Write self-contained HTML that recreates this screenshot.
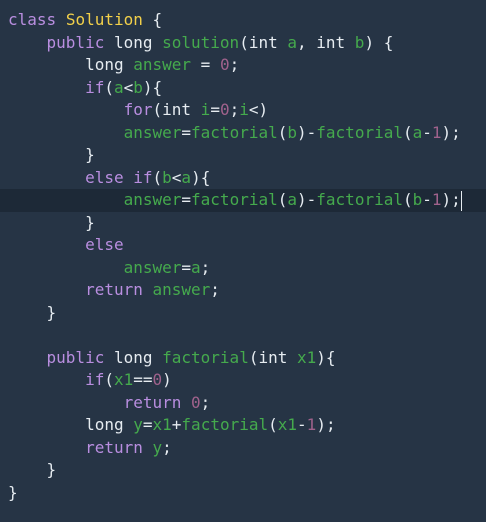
<!DOCTYPE html>
<html><head><style>
html,body{margin:0;padding:0;background:#263445;width:486px;height:522px;overflow:hidden}
pre{margin:0;padding:9px 0 0 8px;font-family:"DejaVu Sans Mono","Liberation Mono",monospace;font-size:16px;line-height:22.5px;color:#e6ecf1;position:relative}
.hl{position:absolute;left:0;top:189px;width:486px;height:22.5px;background:#1d2937}
.cur{position:absolute;left:461px;top:191px;width:1px;height:20px;background:#e6ecf1}
.k{color:#b98ee0}.g{color:#45aa4d}.n{color:#a0628c}.y{color:#f2d04a}
span{position:relative}
</style></head><body>
<div class="hl"></div><div class="cur"></div>
<pre><span class="k">class</span> <span class="y">Solution</span> {
    <span class="k">public</span> long <span class="g">solution</span>(int <span class="g">a</span>, int <span class="g">b</span>) {
        long <span class="g">answer</span> = <span class="n">0</span>;
        <span class="k">if</span>(<span class="g">a</span>&lt;<span class="g">b</span>){
            <span class="k">for</span>(int <span class="g">i</span>=<span class="n">0</span>;<span class="g">i</span>&lt;)
            <span class="g">answer</span>=<span class="g">factorial</span>(<span class="g">b</span>)-<span class="g">factorial</span>(<span class="g">a</span>-<span class="n">1</span>);
        }
        <span class="k">else</span> <span class="k">if</span>(<span class="g">b</span>&lt;<span class="g">a</span>){
            <span class="g">answer</span>=<span class="g">factorial</span>(<span class="g">a</span>)-<span class="g">factorial</span>(<span class="g">b</span>-<span class="n">1</span>);
        }
        <span class="k">else</span>
            <span class="g">answer</span>=<span class="g">a</span>;
        <span class="k">return</span> <span class="g">answer</span>;
    }

    <span class="k">public</span> long <span class="g">factorial</span>(int <span class="g">x1</span>){
        <span class="k">if</span>(<span class="g">x1</span>==<span class="n">0</span>)
            <span class="k">return</span> <span class="n">0</span>;
        long <span class="g">y</span>=<span class="g">x1</span>+<span class="g">factorial</span>(<span class="g">x1</span>-<span class="n">1</span>);
        <span class="k">return</span> <span class="g">y</span>;
    }
}</pre>
</body></html>
